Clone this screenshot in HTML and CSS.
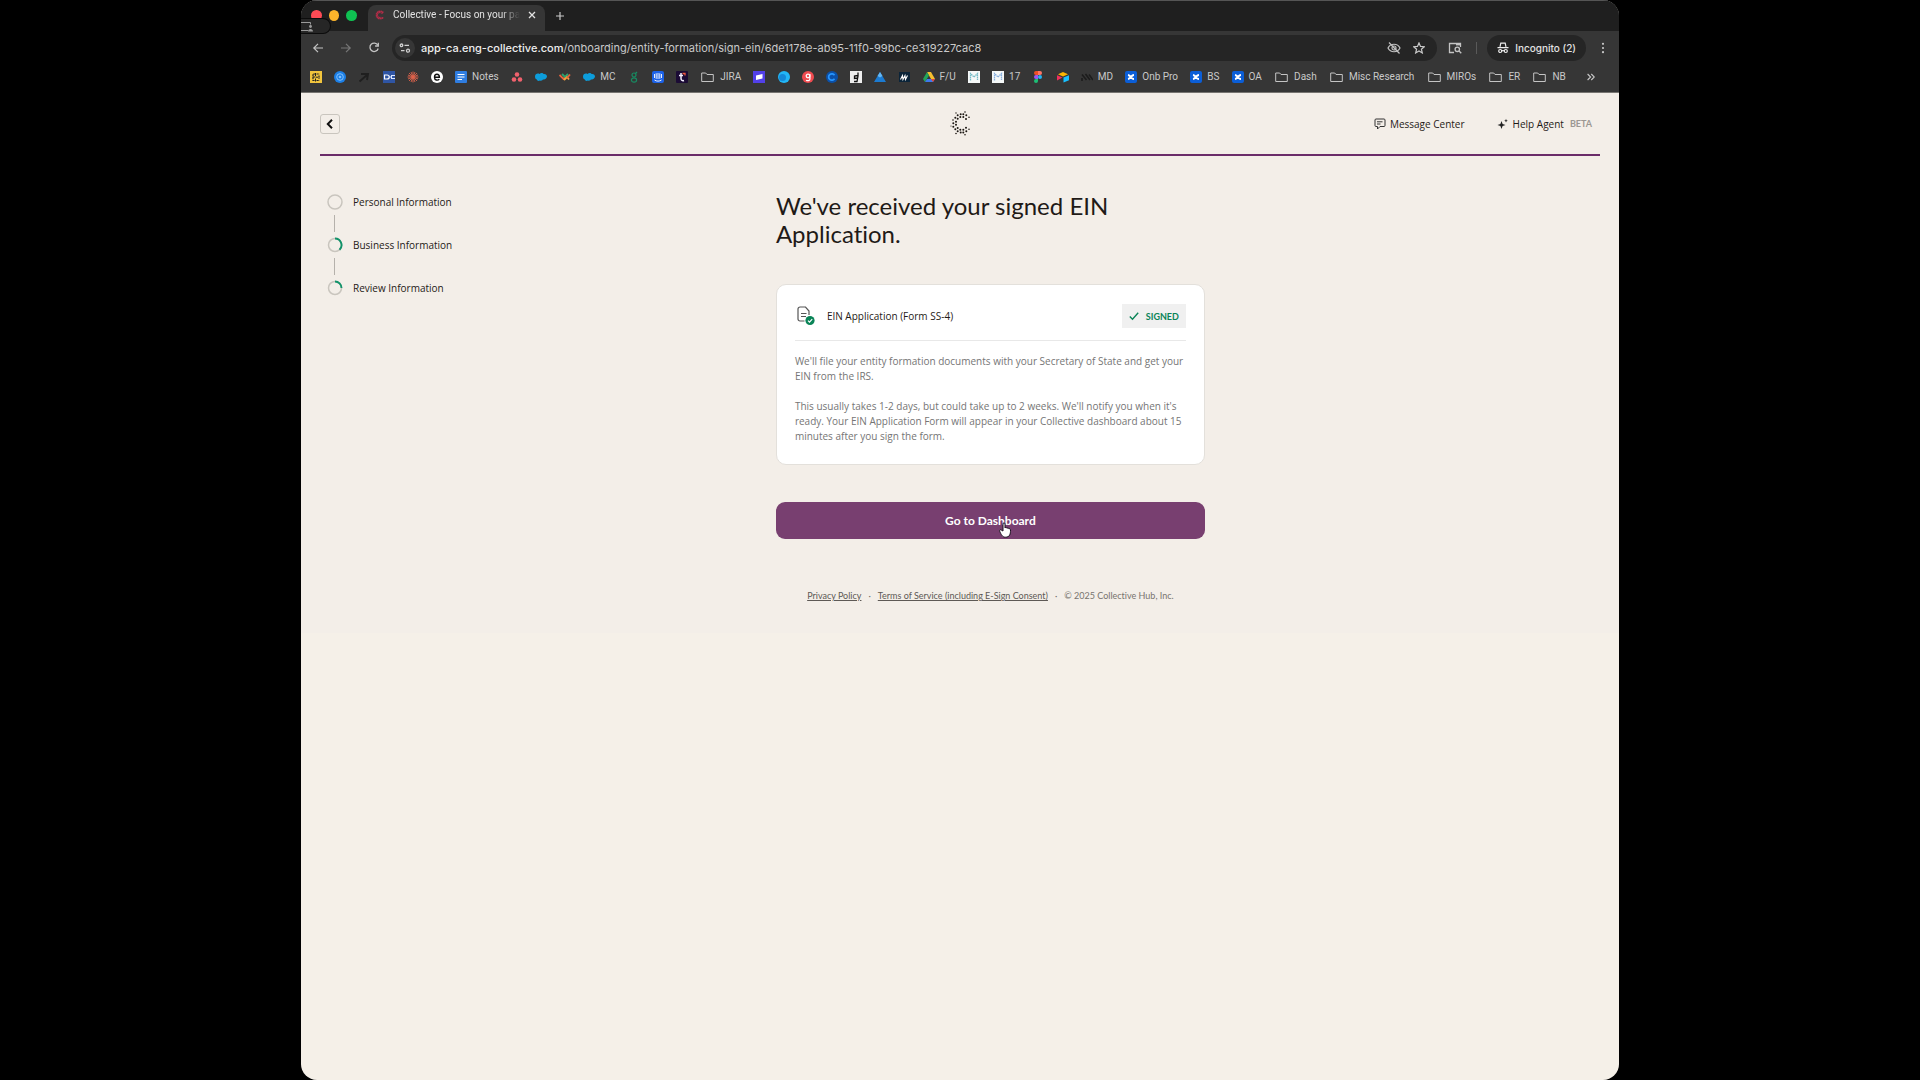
FILE: index.html
```html
<!DOCTYPE html>
<html lang="en">
<head>
<meta charset="utf-8">
<title>Collective - Focus on your passion</title>
<link rel="stylesheet" href="styles.css">
</head>
<body>
<div class="window">
  <div class="chrome">
    <div class="tabstrip">
      <div class="lights"><i class="red"></i><i class="yellow"></i><i class="green"></i></div>
      <div class="tab">
        <svg class="favicon" viewBox="0 0 20 20" fill="none" stroke="#b52c48" stroke-linecap="round"><path d="M15.500 4.500A7.500 7.500 0 1 0 15.500 15.500" stroke-width="3.600" stroke-dasharray=".1 3.600"/><path d="M14 7A5 5 0 1 0 14 13" stroke-width="2.400" stroke-dasharray=".1 2.600"/></svg>
        <span class="tab-title">Collective - Focus on your pa</span>
        <button class="ghost" aria-label="Close tab"><svg class="s8" viewBox="0 0 8 8" stroke="#e3e3e3" stroke-width="1.300"><path d="M1 1l6 6M7 1l-6 6"/></svg></button>
      </div>
      <button class="ghost" aria-label="New tab"><svg class="s8" viewBox="0 0 8 8" stroke="#c9c9c9" stroke-width="1.200"><path d="M4 0v8M0 4h8"/></svg></button>
    </div>
    <div class="toolbar">
      <button class="ghost" aria-label="Back"><svg class="s12" viewBox="0 0 12 12" fill="none" stroke="#c4c4c4" stroke-width="1.200"><path d="M11 6H2M6 1.800L1.800 6L6 10.200"/></svg></button>
      <button class="ghost" aria-label="Forward"><svg class="s12" viewBox="0 0 12 12" fill="none" stroke="#777" stroke-width="1.200"><path d="M1 6h9M6 1.800L10.200 6L6 10.200"/></svg></button>
      <button class="ghost" aria-label="Reload"><svg class="s12" viewBox="0 0 12 12" fill="none" stroke="#c4c4c4" stroke-width="1.300"><path d="M9.800 3.200A4.200 4.200 0 1 0 10.200 6.500"/><path d="M10.300 .8V4H7.100"/></svg></button>
      <div class="omnibox">
        <span class="site"><svg class="s12" viewBox="0 0 12 12" fill="none" stroke="#d0d0d0" stroke-width="1.300"><circle cx="2.500" cy="3.300" r="1.300"/><path d="M5.500 3.300h4.500M2 8.700h3.500"/><circle cx="9" cy="8.700" r="1.500"/></svg></span>
        <span class="url"><b>app-ca.eng-collective.com</b>/onboarding/entity-formation/sign-ein/6de1178e-ab95-11f0-99bc-ce319227cac8</span>
        <svg class="s14" viewBox="0 0 14 14" fill="none" stroke="#c4c4c4" stroke-width="1.200"><path d="M1 7c2.500-5 9.500-5 12 0c-2.500 5-9.500 5-12 0z"/><circle cx="7" cy="7" r="2"/><path d="M2 1.500l10.500 11"/></svg>
        <svg class="s12" viewBox="0 0 12 12" fill="none" stroke="#c9c9c9" stroke-width="1.200"><path d="M6 .9l1.500 3.500 3.800.3-2.900 2.500.9 3.700L6 8.900l-3.300 2 .9-3.700L.7 4.700l3.800-.3z"/></svg>
      </div>
      <svg class="s14" viewBox="0 0 14 14" fill="none" stroke="#c4c4c4" stroke-width="1.300"><path d="M6 11.500H1.500V2.500h11V6"/><path d="M8 3.300h4.500" stroke-width="2.200"/><circle cx="9.300" cy="8.300" r="2.200"/><path d="M11 10l2.300 2.300"/></svg>
      <span class="divider"></span>
      <button class="incognito"><svg class="s12" viewBox="0 0 12 12" fill="none" stroke="#eee" stroke-width="1.200"><path d="M3 4.800l.8-3.600h4.400L9 4.800M.5 5.600h11"/><circle cx="3.200" cy="9" r="1.500"/><circle cx="8.800" cy="9" r="1.500"/><path d="M4.700 8.700h2.600"/></svg>Incognito (2)</button>
      <button class="ghost" aria-label="Menu"><svg class="s12" viewBox="0 0 12 12" fill="#c9c9c9"><circle cx="6" cy="1.800" r="1.100"/><circle cx="6" cy="6" r="1.100"/><circle cx="6" cy="10.200" r="1.100"/></svg></button>
    </div>
    <nav class="bookmarks" aria-label="Bookmarks">
      <div class="marks">
      <a href="#" aria-label="Board"><svg viewBox="0 0 12 12"><path fill="#f2c53d" d="M0 0h12v12H0z"/><path d="M5.500 3H3v6.500h2.500M5.500 6H3M6.500 3h3M6.500 9.500h3M9 4.500V8" fill="none" stroke="#222" stroke-width="1.200" stroke-dasharray="2.200 .6"/><path d="M5.500 2v3M5.500 7.500v3M6 6.200h2" stroke="#222"/></svg></a>
      <a href="#" aria-label="Target"><svg viewBox="0 0 12 12"><circle cx="6" cy="6" r="6" fill="#1c7fe6"/><circle cx="6" cy="6" r="3.300" fill="none" stroke="#8cc8ff" stroke-width=".9"/><circle cx="6" cy="6" r="1.300" fill="#7fc0ff"/></svg></a>
      <a href="#" aria-label="Arrow"><svg viewBox="0 0 12 12"><path d="M1.500 10.500L9 4M3 3h7L9 9" fill="none" stroke="#1f1f1f" stroke-width="2"/></svg></a>
      <a href="#" aria-label="Plug"><svg viewBox="0 0 12 12"><path fill="#2f55a4" d="M0 0h12v12H0z"/><path d="M1.500 4h2.500c3 0 3 4 0 4H1.500z" fill="none" stroke="#fff" stroke-width="1.200"/><path d="M6.500 6h2M8.500 4.500H12M8.500 7.500H12M8.500 4v4" stroke="#dbe6ff"/></svg></a>
      <a href="#" aria-label="Burst"><svg viewBox="0 0 12 12"><path d="M6 .5v11M.5 6h11M2 2l8 8M10 2l-8 8M4 1l4 10M8 1L4 11M1 4l10 4M1 8l10-4" stroke="#e0634c" stroke-width=".9"/></svg></a>
      <a href="#" aria-label="E"><svg viewBox="0 0 12 12"><circle cx="6" cy="6" r="6" fill="#fff"/><path d="M3.800 6.200h4.600C8.300 2.300 3.500 2.400 3.500 6.200c0 3.300 3.300 3.500 4.800 2" fill="none" stroke="#111" stroke-width="1.400"/></svg></a>
      <a href="#"><svg viewBox="0 0 12 12"><rect width="12" height="12" rx="1" fill="#2f7de1"/><path d="M2.500 3.500h7M2.500 6h7M2.500 8.500h4.500" stroke="#fff" stroke-width="1.200"/></svg>Notes</a>
      <a href="#" aria-label="Dots"><svg viewBox="0 0 12 12" fill="#f0616d"><circle cx="6" cy="3.500" r="2.300"/><circle cx="3" cy="8.500" r="2.300"/><circle cx="9" cy="8.500" r="2.300"/></svg></a>
      <a href="#" aria-label="Cloud"><svg viewBox="0 0 12 12"><path d="M0 5.500C0 3 2.500 2 4.500 3C6 1.500 8 2 8.500 3C11 2.500 12.500 4.500 11.800 6.300C11 8.500 9 8.500 8 8.600C7 10 5.500 9.800 5 9.500C3.500 10.500 2 9.500 1.800 8.500C.5 8 0 7 0 5.500z" fill="#0d9ddb"/></svg></a>
      <a href="#" aria-label="Weave"><svg viewBox="0 0 12 12" fill="none" stroke-width="1.800"><path d="M.5 4l4 4L7 5.500" stroke="#e5633d"/><path d="M3 3l3 3 3-3" stroke="#2ba36e"/><path d="M5 9l3-3 2 2.500" stroke="#f0a33c"/><path d="M8 7l3-3.500" stroke="#e5633d"/></svg></a>
      <a href="#"><svg viewBox="0 0 12 12"><path d="M0 5.500C0 3 2.500 2 4.500 3C6 1.500 8 2 8.500 3C11 2.500 12.500 4.500 11.800 6.300C11 8.500 9 8.500 8 8.600C7 10 5.500 9.800 5 9.500C3.500 10.500 2 9.500 1.800 8.500C.5 8 0 7 0 5.500z" fill="#0d9ddb"/></svg>MC</a>
      <a href="#" aria-label="Knot"><svg viewBox="0 0 12 12" fill="none" stroke="#178b62" stroke-width="1.200"><circle cx="6" cy="4" r="2"/><ellipse cx="6" cy="9" rx="2.600" ry="2.200"/><path d="M7 3l2-2"/></svg></a>
      <a href="#" aria-label="Chat"><svg viewBox="0 0 12 12"><rect width="12" height="12" rx="2" fill="#1c62e8"/><path d="M2.500 3v4M4.200 2.300v5.500M6 2v6M7.800 2.300v5.500M9.500 3v4M2.500 9c2 1.500 5 1.500 7 0" stroke="#fff" stroke-width=".9" fill="none"/></svg></a>
      <a href="#" aria-label="Tee"><svg viewBox="0 0 12 12"><rect width="12" height="12" rx="1" fill="#1b0b35"/><path d="M5 2v5.500c0 2 1.500 2.500 3 2M3 4.500h4" stroke="#f4f0ff" stroke-width="1.500" fill="none"/><path d="M6.500 2.500H9v2" stroke="#f0593e" stroke-width="1.300" fill="none"/></svg></a>
      <a href="#" class="folder"><svg viewBox="0 0 13 12"><path d="M.7 2h4l1.300 1.500h6.300v7H.7z"/></svg>JIRA</a>
      <a href="#" aria-label="Loom"><svg viewBox="0 0 12 12"><path fill="#5240e8" d="M0 0h12v12H0z"/><path d="M3 4.500L9.500 3v4.500L3 9z" fill="#fff"/></svg></a>
      <a href="#" aria-label="Globe"><svg viewBox="0 0 12 12"><circle cx="6" cy="6" r="6" fill="#22b6f6"/><circle cx="4.500" cy="6.500" r="3.500" fill="#1489d8"/></svg></a>
      <a href="#" aria-label="G"><svg viewBox="0 0 12 12"><circle cx="6" cy="6" r="6" fill="#ef4b50"/><circle cx="6" cy="5" r="1.800" fill="none" stroke="#fff" stroke-width="1.300"/><path d="M7.900 3v5c0 2-2.500 2-3.800 1.200" fill="none" stroke="#fff" stroke-width="1.300"/></svg></a>
      <a href="#" aria-label="Ring"><svg viewBox="0 0 12 12"><circle cx="6" cy="6" r="6" fill="#0b50a8"/><path d="M8.500 4.200A3.200 3.200 0 1 0 8.500 7.800" fill="none" stroke="#2796ff" stroke-width="1.700"/></svg></a>
      <a href="#" aria-label="Hook"><svg viewBox="0 0 12 12"><path fill="#eee" d="M0 0h12v12H0z"/><path d="M8 1.500v3.500L7 10.500H4M7.500 4.500L4.500 5v2.500l3-.5" fill="none" stroke="#111" stroke-width="1.300"/></svg></a>
      <a href="#" aria-label="Peak"><svg viewBox="0 0 12 12"><path d="M6 1l6 10H0z" fill="#1c7bd1"/><path d="M6 1l2.500 4L6 6.500L3.500 5z" fill="#63b7f5"/></svg></a>
      <a href="#" aria-label="Wave"><svg viewBox="0 0 12 12"><path fill="#0b2439" d="M1 1h11v10H1z"/><path d="M2.500 8.500l2-4 .5 4 2-4 .5 4 2-4" fill="none" stroke="#fff" stroke-width="1.100"/></svg></a>
      <a href="#"><svg viewBox="0 0 12 12"><path d="M4 1h4l4 7H8z" fill="#f6c02f"/><path d="M4 1L0 8l2 3 4-6.500z" fill="#22a45a"/><path d="M2 11l2-3h8l-2 3z" fill="#3e79ec"/><path d="M8 8h4l-2 3z" fill="#e6473a"/></svg>F/U</a>
      <a href="#" aria-label="Sheet"><svg viewBox="0 0 12 12"><path fill="#f5f8f8" d="M0 0h12v12H0z"/><path d="M2.500 9.500v-7L6 6l3.500-3.500v7" fill="none" stroke="#74bcc7" stroke-width="1.300" stroke-dasharray="1.500 .5"/></svg></a>
      <a href="#"><svg viewBox="0 0 12 12"><path fill="#f5f8f8" d="M0 0h12v12H0z"/><path d="M2.500 9.500v-7L6 6l3.500-3.500v7" fill="none" stroke="#86aede" stroke-width="1.300" stroke-dasharray="1.500 .5"/></svg>17</a>
      <a href="#" aria-label="Figma"><svg viewBox="0 0 12 12"><path d="M4 0h2v4H4a2 2 0 0 1 0-4z" fill="#ef4e27"/><path d="M6 0h2a2 2 0 0 1 0 4H6z" fill="#ff7466"/><path d="M4 4h2v4H4a2 2 0 0 1 0-4z" fill="#9b55f0"/><circle cx="8" cy="6" r="2" fill="#22b4f4"/><path d="M4 8h2v2a2 2 0 1 1-2-2z" fill="#1dbf75"/></svg></a>
      <a href="#" aria-label="Table"><svg viewBox="0 0 12 12"><path d="M1 3.200L6 1l5 2.200L6 5.500z" fill="#fcb400"/><path d="M6.500 6.500L12 4.300v5L6.500 11.500z" fill="#18bfff"/><path d="M0 4.300L5.500 6.500L0 9.500z" fill="#f0305c"/></svg></a>
      <a href="#"><svg viewBox="0 0 12 12"><path d="M1 3.500L5.500 9M4.500 3L9 9M8 3.500L12 9M1 7v3" stroke="#1c1c1c" stroke-width="1.600"/></svg>MD</a>
      <a href="#"><svg viewBox="0 0 12 12"><rect width="12" height="12" rx="2" fill="#0b5ed7"/><path d="M3 4c3 .5 3 4 6 4M3 8c3-.5 3-4 6-4" fill="none" stroke="#fff" stroke-width="1.800"/></svg>Onb Pro</a>
      <a href="#"><svg viewBox="0 0 12 12"><rect width="12" height="12" rx="2" fill="#0b5ed7"/><path d="M3 4c3 .5 3 4 6 4M3 8c3-.5 3-4 6-4" fill="none" stroke="#fff" stroke-width="1.800"/></svg>BS</a>
      <a href="#"><svg viewBox="0 0 12 12"><rect width="12" height="12" rx="2" fill="#0b5ed7"/><path d="M3 4c3 .5 3 4 6 4M3 8c3-.5 3-4 6-4" fill="none" stroke="#fff" stroke-width="1.800"/></svg>OA</a>
      <a href="#" class="folder"><svg viewBox="0 0 13 12"><path d="M.7 2h4l1.300 1.500h6.300v7H.7z"/></svg>Dash</a>
      <a href="#" class="folder"><svg viewBox="0 0 13 12"><path d="M.7 2h4l1.300 1.500h6.300v7H.7z"/></svg>Misc Research</a>
      <a href="#" class="folder"><svg viewBox="0 0 13 12"><path d="M.7 2h4l1.300 1.500h6.300v7H.7z"/></svg>MIROs</a>
      <a href="#" class="folder"><svg viewBox="0 0 13 12"><path d="M.7 2h4l1.300 1.500h6.300v7H.7z"/></svg>ER</a>
      <a href="#" class="folder"><svg viewBox="0 0 13 12"><path d="M.7 2h4l1.300 1.500h6.300v7H.7z"/></svg>NB</a>
      </div>
      <button class="ghost" aria-label="More bookmarks"><svg class="s8" viewBox="0 0 8 8" fill="none" stroke="#c9c9c9" stroke-width="1.100"><path d="M.6 1L3.600 4L.6 7M4.300 1l3 3-3 3"/></svg></button>
    </nav>
    <div class="share"><svg viewBox="0 0 14 12" fill="none" stroke="#9a9a9a"><path d="M0 1.500h9.500v2M0 9.500h7"/><circle cx="9.500" cy="5.500" r="1.400" fill="#9a9a9a" stroke="none"/><path d="M7 10.500c0-3.500 5-3.500 5 0z" fill="#9a9a9a" stroke="none"/></svg></div>
  </div>

  <div class="page">
    <header class="topbar">
      <button class="back" aria-label="Back"><svg class="s12" viewBox="0 0 12 12" fill="none" stroke="#111" stroke-width="2"><path d="M8 1.800L3.800 6L8 10.200"/></svg></button>
      <svg class="logo" viewBox="0 0 20 25" fill="#1c1713"><g><circle cx="15" cy="1" r=".8"/><circle cx="6" cy="2" r=".7"/><circle cx="19" cy="6.300" r=".8"/><circle cx="3" cy="9" r=".8"/><circle cx="1" cy="15" r=".6"/><circle cx="6" cy="22.500" r=".8"/><circle cx="15" cy="23.700" r=".8"/><circle cx="19" cy="18.300" r=".8"/></g><g><circle cx="7.700" cy="4.300" r="1"/><circle cx="10.700" cy="3.200" r="1"/><circle cx="13.300" cy="3.200" r="1"/><circle cx="16.300" cy="4.300" r="1"/><circle cx="5.300" cy="6.700" r="1"/><circle cx="7.700" cy="7.700" r="1"/><circle cx="10.300" cy="6" r="1"/><circle cx="13.300" cy="6" r="1"/><circle cx="16" cy="8" r="1"/><circle cx="6" cy="10.700" r="1"/><circle cx="3.300" cy="12.300" r="1"/><circle cx="6" cy="13.700" r="1"/><circle cx="3.300" cy="15.700" r="1"/><circle cx="5.300" cy="18.300" r="1"/><circle cx="7.700" cy="17" r="1"/><circle cx="7.700" cy="20.300" r="1"/><circle cx="10.300" cy="18.700" r="1"/><circle cx="13.300" cy="18.700" r="1"/><circle cx="16" cy="16.700" r="1"/><circle cx="10.700" cy="21.500" r="1"/><circle cx="13.300" cy="21.500" r="1"/><circle cx="16.300" cy="20.300" r="1"/></g></svg>
      <nav class="help">
        <a href="#"><svg class="s12" viewBox="0 0 12 12" fill="none" stroke="#333"><path d="M2 1h8a1 1 0 0 1 1 1v5.500a1 1 0 0 1-1 1H6L3.500 11V8.500H2a1 1 0 0 1-1-1V2a1 1 0 0 1 1-1z"/><path d="M3 3.800h5.500M3 6h3.500"/></svg>Message Center</a>
        <a href="#"><svg class="s12" viewBox="0 0 12 12" fill="#222"><path d="M4.500 3l1.100 2.900L8.500 7l-2.900 1.100L4.500 11L3.400 8.100L.5 7l2.900-1.100z"/><path d="M9 .8l.5 1.400 1.300.5-1.300.5L9 4.600l-.5-1.400-1.300-.5 1.300-.5z"/></svg>Help Agent <small>BETA</small></a>
      </nav>
    </header>
    <div class="layout">
      <ol class="steps">
        <li><svg viewBox="0 0 16 16" fill="none" stroke="#c9c5be" stroke-width="1.500"><circle cx="8" cy="8" r="7"/></svg>Personal Information</li>
        <li><svg viewBox="0 0 16 16" fill="none" stroke="#c9c5be" stroke-width="1.500"><circle cx="8" cy="8" r="6.500"/><path d="M8 1.500A6.500 6.500 0 0 1 12.500 12.700" stroke="#12936a" stroke-width="1.900"/></svg>Business Information</li>
        <li><svg viewBox="0 0 16 16" fill="none" stroke="#c9c5be" stroke-width="1.500"><circle cx="8" cy="8" r="6.500"/><path d="M8 1.500A6.500 6.500 0 0 1 14.500 8" stroke="#12936a" stroke-width="1.900"/></svg>Review Information</li>
      </ol>
      <main class="content">
        <h1>We've received your signed EIN Application.</h1>
        <section class="card">
          <div class="card-head">
            <svg class="doc" viewBox="0 0 18 20" fill="none" stroke="#555" stroke-width="1.200"><path d="M7.500 15H3a2 2 0 0 1-2-2V3a2 2 0 0 1 2-2h5.500L12 5v4"/><path d="M4 7.500h5.500M4 10.500h5"/><circle cx="13" cy="14.500" r="4.600" fill="#0a8457" stroke="none"/><path d="M11 14.600l1.500 1.500 2.700-3" stroke="#fff"/></svg>
            <h2>EIN Application (Form SS-4)</h2>
            <span class="badge"><svg class="s10" viewBox="0 0 10 10" fill="none" stroke="#0a8457" stroke-width="1.400"><path d="M.8 5.500l2.700 2.700 5.700-6.400"/></svg>SIGNED</span>
          </div>
          <p>We'll file your entity formation documents with your Secretary of State and get your EIN from the IRS.</p>
          <p>This usually takes 1-2 days, but could take up to 2 weeks. We'll notify you when it's ready. Your EIN Application Form will appear in your Collective dashboard about 15 minutes after you sign the form.</p>
        </section>
        <button class="primary">Go to Dashboard<svg class="cursor" viewBox="0 0 12 16"><path d="M4 9V2c0-1.700 2-1.700 2 0v4c.3-.8 1.800-.7 2 .3c.5-.6 1.700-.4 1.900.5c.7-.3 1.600 0 1.600 1.200c0 4-.5 7.200-5.200 7.200c-3 0-4.300-3-5.600-6C.2 7.800 1.800 7.200 2.600 8.300z" fill="#fff" stroke="#1b1020"/></svg></button>
        <footer><a href="#">Privacy Policy</a><span>·</span><a href="#">Terms of Service (including E-Sign Consent)</a><span>·</span><span>© 2025 Collective Hub, Inc.</span></footer>
      </main>
    </div>
  </div>
</div>
</body>
</html>
```
FILE: styles.css
```css
* { box-sizing: border-box; }
body {
  margin: 0;
  padding: 0 301px;
  background: #000;
  font-family: "Open Sans", sans-serif;
  font-variant-ligatures: none;
  color: #1f1a17;
}
button { font: inherit; cursor: pointer; }
a { color: inherit; text-decoration: none; }
svg { display: block; flex: none; }
.s8 { width: 8px; height: 8px; }
.s10 { width: 10px; height: 10px; }
.s12 { width: 12px; height: 12px; }
.s14 { width: 14px; height: 14px; }

.window {
  display: flex;
  flex-direction: column;
  min-height: 100vh;
  overflow: hidden;
  border-radius: 16px;
  background: #f5f0e8;
}

/* Browser chrome */
.chrome {
  position: relative;
  background: #363636;
  border-bottom: 1px solid #777571;
  color: #c9c9c9;
  font: 10px/12px "Roboto", sans-serif;
}
.ghost { display: flex; padding: 0; border: 0; background: none; }
.tabstrip {
  display: flex;
  align-items: center;
  gap: 11px;
  height: 31px;
  padding: 0 0 1px 10px;
  border-top: 1px solid #555;
  background: #1f1f1f;
}
.lights { display: flex; gap: 7px; width: 46px; }
.lights i { width: 11px; height: 11px; border-radius: 50%; }
.red { background: #ff4b55; }
.yellow { background: #fdb52b; }
.green { background: #0fc152; }
.tab {
  display: flex;
  align-items: center;
  gap: 8px;
  align-self: flex-end;
  width: 177px;
  height: 26px;
  margin-bottom: -1px;
  padding: 0 9px 6px 7px;
  border-radius: 8px 8px 0 0;
  background: #363636;
}
.favicon { width: 10px; height: 10px; }
.tab-title {
  flex: 1;
  white-space: nowrap;
  color: #e3e3e3;
  -webkit-mask-image: linear-gradient(90deg, #000 85%, transparent);
  mask-image: linear-gradient(90deg, #000 85%, transparent);
}
.toolbar {
  display: flex;
  align-items: center;
  gap: 16px;
  height: 34px;
  padding: 0 10px 0 11px;
}
.omnibox {
  display: flex;
  align-items: center;
  gap: 12px;
  flex: 1;
  height: 26px;
  margin: 0 -5px 0 -4px;
  padding: 0 12px 0 3px;
  border-radius: 13px;
  background: #252525;
}
.site {
  display: grid;
  place-items: center;
  width: 20px;
  height: 20px;
  margin-right: -6px;
  border-radius: 50%;
  background: #363636;
}
.url { flex: 1; font-family: "Inter", sans-serif; font-size: 11px; white-space: nowrap; }
.url b { font-weight: 500; color: #eee; }
.divider { width: 1px; height: 12px; margin: 0 -6px 0 -2px; background: #5a5a5a; }
.incognito {
  display: flex;
  align-items: center;
  gap: 6px;
  height: 26px;
  padding: 0 10px;
  border: 0;
  border-radius: 13px;
  background: #252525;
  color: #e3e3e3;
  font-family: "Inter", sans-serif;
  font-weight: 500;
}
.toolbar .ghost:last-child { margin-left: -5px; }
.bookmarks {
  display: flex;
  align-items: center;
  gap: 21px;
  height: 27px;
  padding: 0 24px 4px 9px;
}
.marks { display: flex; flex: 1; justify-content: space-between; }
.marks a { display: flex; align-items: center; gap: 5px; white-space: nowrap; }
.marks svg { width: 12px; height: 12px; }
.marks .folder { gap: 6px; padding-left: 1px; }
.marks .folder svg { width: 13px; fill: none; stroke: #c4c4c4; stroke-width: 1; }
.share {
  position: absolute;
  top: 18px;
  left: 0;
  width: 30px;
  height: 16px;
  padding: 2px 0;
  border: 1px solid #0c0c0c;
  border-left: 0;
  border-radius: 0 8px 8px 0;
  background: #262626;
}
.share svg { width: 14px; height: 12px; }

/* Application page */
.page { padding: 0 19px; background: #f3eee8; }
.topbar {
  display: grid;
  grid-template-columns: 1fr auto 1fr;
  align-items: center;
  height: 63px;
  border-bottom: 2px solid #6a2c69;
}
.back {
  display: grid;
  place-items: center;
  width: 20px;
  height: 20px;
  padding: 0;
  border: 1px solid #c9c5be;
  border-radius: 3px;
  background: none;
}
.logo { width: 20px; height: 25px; }
.help {
  display: flex;
  justify-content: flex-end;
  gap: 32px;
  padding-right: 8px;
  font-size: 10px;
  line-height: 16px;
}
.help a { display: flex; align-items: center; gap: 4px; }
.help small { margin-left: 2px; font-family: "Lato", sans-serif; font-size: 9px; font-weight: 700; color: #9b9792; }
.layout { display: grid; grid-template-columns: 15fr 429px 13fr; }
.steps { margin: 0; padding: 38px 0 0 7px; list-style: none; font-size: 10px; line-height: 16px; }
.steps li { display: grid; grid-template-columns: 16px 1fr; column-gap: 10px; }
.steps svg { width: 16px; height: 16px; }
.steps li + li::before {
  content: "";
  grid-column: 1 / -1;
  width: 1px;
  height: 17px;
  margin: 5px 0 5px 7px;
  background: #b5b1ab;
}
h1 {
  margin: 36px 0;
  padding-right: 64px;
  font-family: "Lato", sans-serif;
  font-size: 24px;
  line-height: 28px;
  font-weight: 400;
}
.card {
  padding: 18px 18px 20px;
  border: 1px solid #e3e0db;
  border-radius: 10px;
  background: #fff;
}
.card-head {
  display: flex;
  align-items: center;
  gap: 12px;
  padding: 1px 0 12px;
  border-bottom: 1px solid #e8e8e8;
}
.doc { width: 18px; height: 20px; margin-left: 2px; }
h2 { flex: 1; margin: 0; font-size: 10px; line-height: 16px; font-weight: 400; }
.badge {
  display: flex;
  align-items: center;
  gap: 7px;
  height: 24px;
  padding: 0 7px;
  background: #f0f0f0;
  color: #0a8457;
  font-family: "Lato", sans-serif;
  font-size: 9px;
  font-weight: 700;
}
.card p { margin: 13px 0 0; font-size: 10px; line-height: 15px; color: #757575; }
.card p + p { margin-top: 15px; }
.primary {
  position: relative;
  display: block;
  width: 100%;
  height: 37px;
  margin: 37px 0 0;
  border: 0;
  border-radius: 9px;
  background: #783f70;
  color: #fff;
  font-family: "Lato", sans-serif;
  font-size: 12px;
  font-weight: 700;
}
.cursor { position: absolute; top: 20px; left: 223px; width: 12px; height: 16px; }
footer {
  display: flex;
  justify-content: center;
  gap: 7px;
  padding: 50px 0 30px;
  font-family: "Lato", sans-serif;
  font-size: 9px;
  line-height: 14px;
  color: #77736e;
}
footer a { color: #5d5955; text-decoration: underline; }
```
